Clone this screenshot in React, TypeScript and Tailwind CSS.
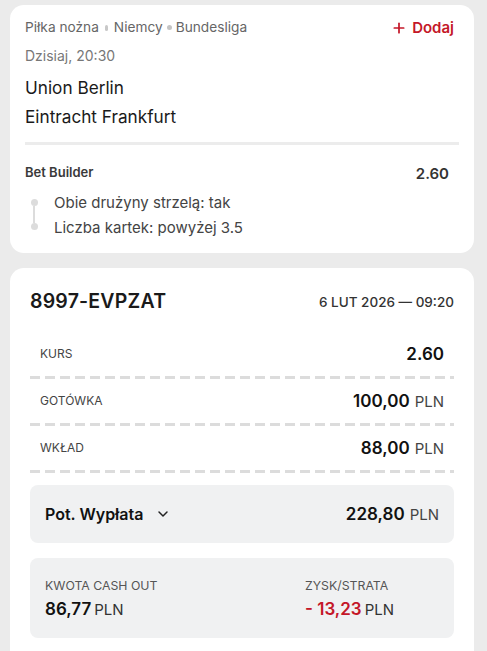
import { ChevronDown, Plus } from "lucide-react";

const dashed =
    "h-[3px] w-full bg-[repeating-linear-gradient(90deg,#dcdcdc_0_10px,transparent_10px_15px)]";

function Dot({ tall }: { tall?: boolean }) {
    return (
        <span
            className={
                tall
                    ? "inline-block w-[3px] h-[6px] rounded-full bg-[#c8c8c8] mx-[6px] mb-[1px]"
                    : "inline-block w-[5px] h-[5px] rounded-full bg-[#c4c4c4] mx-[4px] mb-[2px]"
            }
        />
    );
}

function Row({ label, value, unit }: { label: string; value: string; unit?: string }) {
    return (
        <>
            <div className="flex items-center justify-between px-[10px] h-[44px]">
                <span className="text-[12px] text-[#444] uppercase">{label}</span>
                <span className="text-[#111]">
                    <span className="text-[17px] font-semibold">{value}</span>
                    {unit && <span className="text-[15px] text-[#444] ml-[5px]">{unit}</span>}
                </span>
            </div>
            <div className={dashed} />
        </>
    );
}

export default function App() {
    return (
        <div
            className="min-h-[651px] bg-[#ebebeb] pt-[5px] pl-[10px] pr-[13px] space-y-[15px]"
            style={{ fontFamily: "Inter, 'Noto Sans', sans-serif" }}
        >
            <div className="bg-white rounded-[14px] pt-[12px] pb-[13px] px-[15px]">
                <div className="flex items-start justify-between pr-[5px]">
                    <div className="text-[13.7px] text-[#666] leading-[20px]">
                        Piłka nożna
                        <Dot tall />
                        Niemcy
                        <Dot />
                        Bundesliga
                    </div>
                    <button className="flex items-center gap-[5px] text-[#c41728] font-semibold text-[15px] leading-[20px] mt-[1px]">
                        <Plus className="w-[16px] h-[16px]" strokeWidth={2.6} />
                        Dodaj
                    </button>
                </div>
                <div className="text-[14px] text-[#777] mt-[8px] leading-[20px]">Dzisiaj, 20:30</div>
                <div className="text-[17.2px] text-[#1a1a1a] mt-[11px] leading-[22px]">Union Berlin</div>
                <div className="text-[17.2px] text-[#1a1a1a] mt-[7px] leading-[22px]">Eintracht Frankfurt</div>
                <div className="h-[3px] bg-[#ececec] mt-[14px]" />
                <div className="flex justify-between items-start mt-[18px] pr-[10px]">
                    <span className="text-[13px] font-semibold text-[#3a3a3a] leading-[18px]">Bet Builder</span>
                    <span className="text-[15px] font-semibold text-[#333] mt-[1px] leading-[20px]">2.60</span>
                </div>
                <div className="flex mt-[6px]">
                    <div className="w-[18px] mr-[11px] flex flex-col items-center pt-[9px]">
                        <span className="w-[7px] h-[7px] rounded-full bg-[#dcdcdc]" />
                        <span className="w-[2px] h-[17px] bg-[#dcdcdc]" />
                        <span className="w-[7px] h-[7px] rounded-full bg-[#dcdcdc]" />
                    </div>
                    <div className="text-[15px] text-[#444] leading-[25px]">
                        <div>Obie drużyny strzelą: tak</div>
                        <div>Liczba kartek: powyżej 3.5</div>
                    </div>
                </div>
            </div>

            <div className="bg-white rounded-t-[14px] pt-[19px] px-[20px] pb-[14px]">
                <div className="flex items-center justify-between">
                    <span className="text-[19.5px] font-semibold text-[#1a1a1a] tracking-[0.2px]">8997-EVPZAT</span>
                    <span className="text-[13.5px] font-medium text-[#333]">6 LUT 2026 — 09:20</span>
                </div>
                <div className="mt-[16px]">
                    <Row label="Kurs" value="2.60" />
                    <Row label="Gotówka" value="100,00" unit="PLN" />
                    <Row label="Wkład" value="88,00" unit="PLN" />
                </div>
                <div className="mt-[12px] bg-[#f0f1f2] rounded-[8px] h-[58px] flex items-center justify-between pl-[15px] pr-[15px]">
                    <div className="flex items-center gap-[12px]">
                        <span className="text-[16px] font-semibold text-[#111]">Pot. Wypłata</span>
                        <ChevronDown className="w-[16px] h-[16px] text-[#222]" strokeWidth={2.2} />
                    </div>
                    <span className="text-[#111]">
                        <span className="text-[17px] font-semibold">228,80</span>
                        <span className="text-[15px] text-[#444] ml-[5px]">PLN</span>
                    </span>
                </div>
                <div className="mt-[15px] bg-[#f0f1f2] rounded-[8px] h-[80px] grid grid-cols-[260px_1fr] items-center px-[15px] pt-[3px]">
                    <div>
                        <div className="text-[12.3px] text-[#555] leading-[16px]">KWOTA CASH OUT</div>
                        <div className="mt-[4px] leading-[22px]">
                            <span className="text-[17px] font-semibold text-[#111]">86,77</span>
                            <span className="text-[15px] text-[#333] ml-[3px]">PLN</span>
                        </div>
                    </div>
                    <div>
                        <div className="text-[12.3px] text-[#555] leading-[16px]">ZYSK/STRATA</div>
                        <div className="mt-[4px] leading-[22px]">
                            <span className="text-[17px] font-semibold text-[#c41728]">- 13,23</span>
                            <span className="text-[15px] text-[#333] ml-[3px]">PLN</span>
                        </div>
                    </div>
                </div>
            </div>
        </div>
    );
}
